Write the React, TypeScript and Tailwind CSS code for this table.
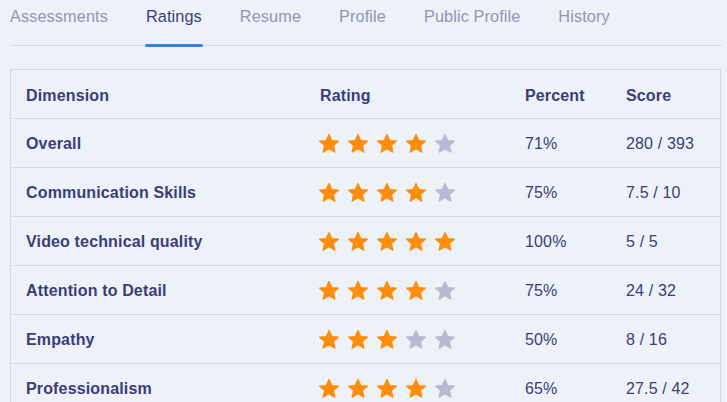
import React from 'react';

interface RatingRow {
  name: string;
  stars: number;
  percent: string;
  score: string;
}

const tabs = ['Assessments', 'Ratings', 'Resume', 'Profile', 'Public Profile', 'History'];

const rows: RatingRow[] = [
  { name: 'Overall', stars: 4, percent: '71%', score: '280 / 393' },
  { name: 'Communication Skills', stars: 4, percent: '75%', score: '7.5 / 10' },
  { name: 'Video technical quality', stars: 5, percent: '100%', score: '5 / 5' },
  { name: 'Attention to Detail', stars: 4, percent: '75%', score: '24 / 32' },
  { name: 'Empathy', stars: 3, percent: '50%', score: '8 / 16' },
  { name: 'Professionalism', stars: 4, percent: '65%', score: '27.5 / 42' },
];

const Star: React.FC<{ filled: boolean }> = ({ filled }) => (
  <svg width="22" height="21" viewBox="0 0 24 23" className={filled ? 'text-[#ff8c0a]' : 'text-[#b9bacd]'}>
    <polygon
      points="12,1.5 15.1,8.2 22.4,8.9 16.9,13.8 18.5,21 12,17.3 5.5,21 7.1,13.8 1.6,8.9 8.9,8.2"
      fill="currentColor"
      stroke="currentColor"
      strokeWidth="1.2"
      strokeLinejoin="round"
    />
  </svg>
);

const Stars: React.FC<{ count: number }> = ({ count }) => (
  <div className="flex items-center gap-[7px] -ml-[2px]">
    {[0, 1, 2, 3, 4].map(i => (
      <Star key={i} filled={i < count} />
    ))}
  </div>
);

export default function App() {
  return (
    <div
      className="w-[727px] h-[402px] overflow-hidden bg-[#edf1f8] text-[#3b3d78]"
      style={{ fontFamily: '"Liberation Sans", Arial, sans-serif' }}
    >
      <div className="ml-[10px] w-[712px] h-[46px] flex gap-[38px] border-b border-[#d6dae6]">
        {tabs.map(tab => {
          const active = tab === 'Ratings';
          return (
            <div
              key={tab}
              className={`relative pt-[6px] text-[16.3px] leading-[20px] tracking-[0.1px] ${active ? 'text-[#3b3d78]' : 'text-[#9296b3]'}`}
            >
              {tab}
              {active && <span className="absolute -left-px -right-px bottom-[-2px] h-[3px] rounded-full bg-[#3b82e0]" />}
            </div>
          );
        })}
      </div>

      <div className="ml-[10px] mt-[23px] w-[711px] border border-[#d4d9e6] text-[16px] tracking-[0.15px]">
        <div className="grid grid-cols-[294px_205px_101px_1fr] items-center h-[49px] pl-[15px] pt-[3px] border-b border-[#d4d9e6] font-bold">
          <div>Dimension</div>
          <div>Rating</div>
          <div>Percent</div>
          <div>Score</div>
        </div>
        {rows.map(row => (
          <div
            key={row.name}
            className="grid grid-cols-[294px_205px_101px_1fr] items-center h-[49px] pl-[15px] pt-px border-b border-[#d4d9e6]"
          >
            <div className="font-bold">{row.name}</div>
            <Stars count={row.stars} />
            <div>{row.percent}</div>
            <div>{row.score}</div>
          </div>
        ))}
      </div>
    </div>
  );
}
